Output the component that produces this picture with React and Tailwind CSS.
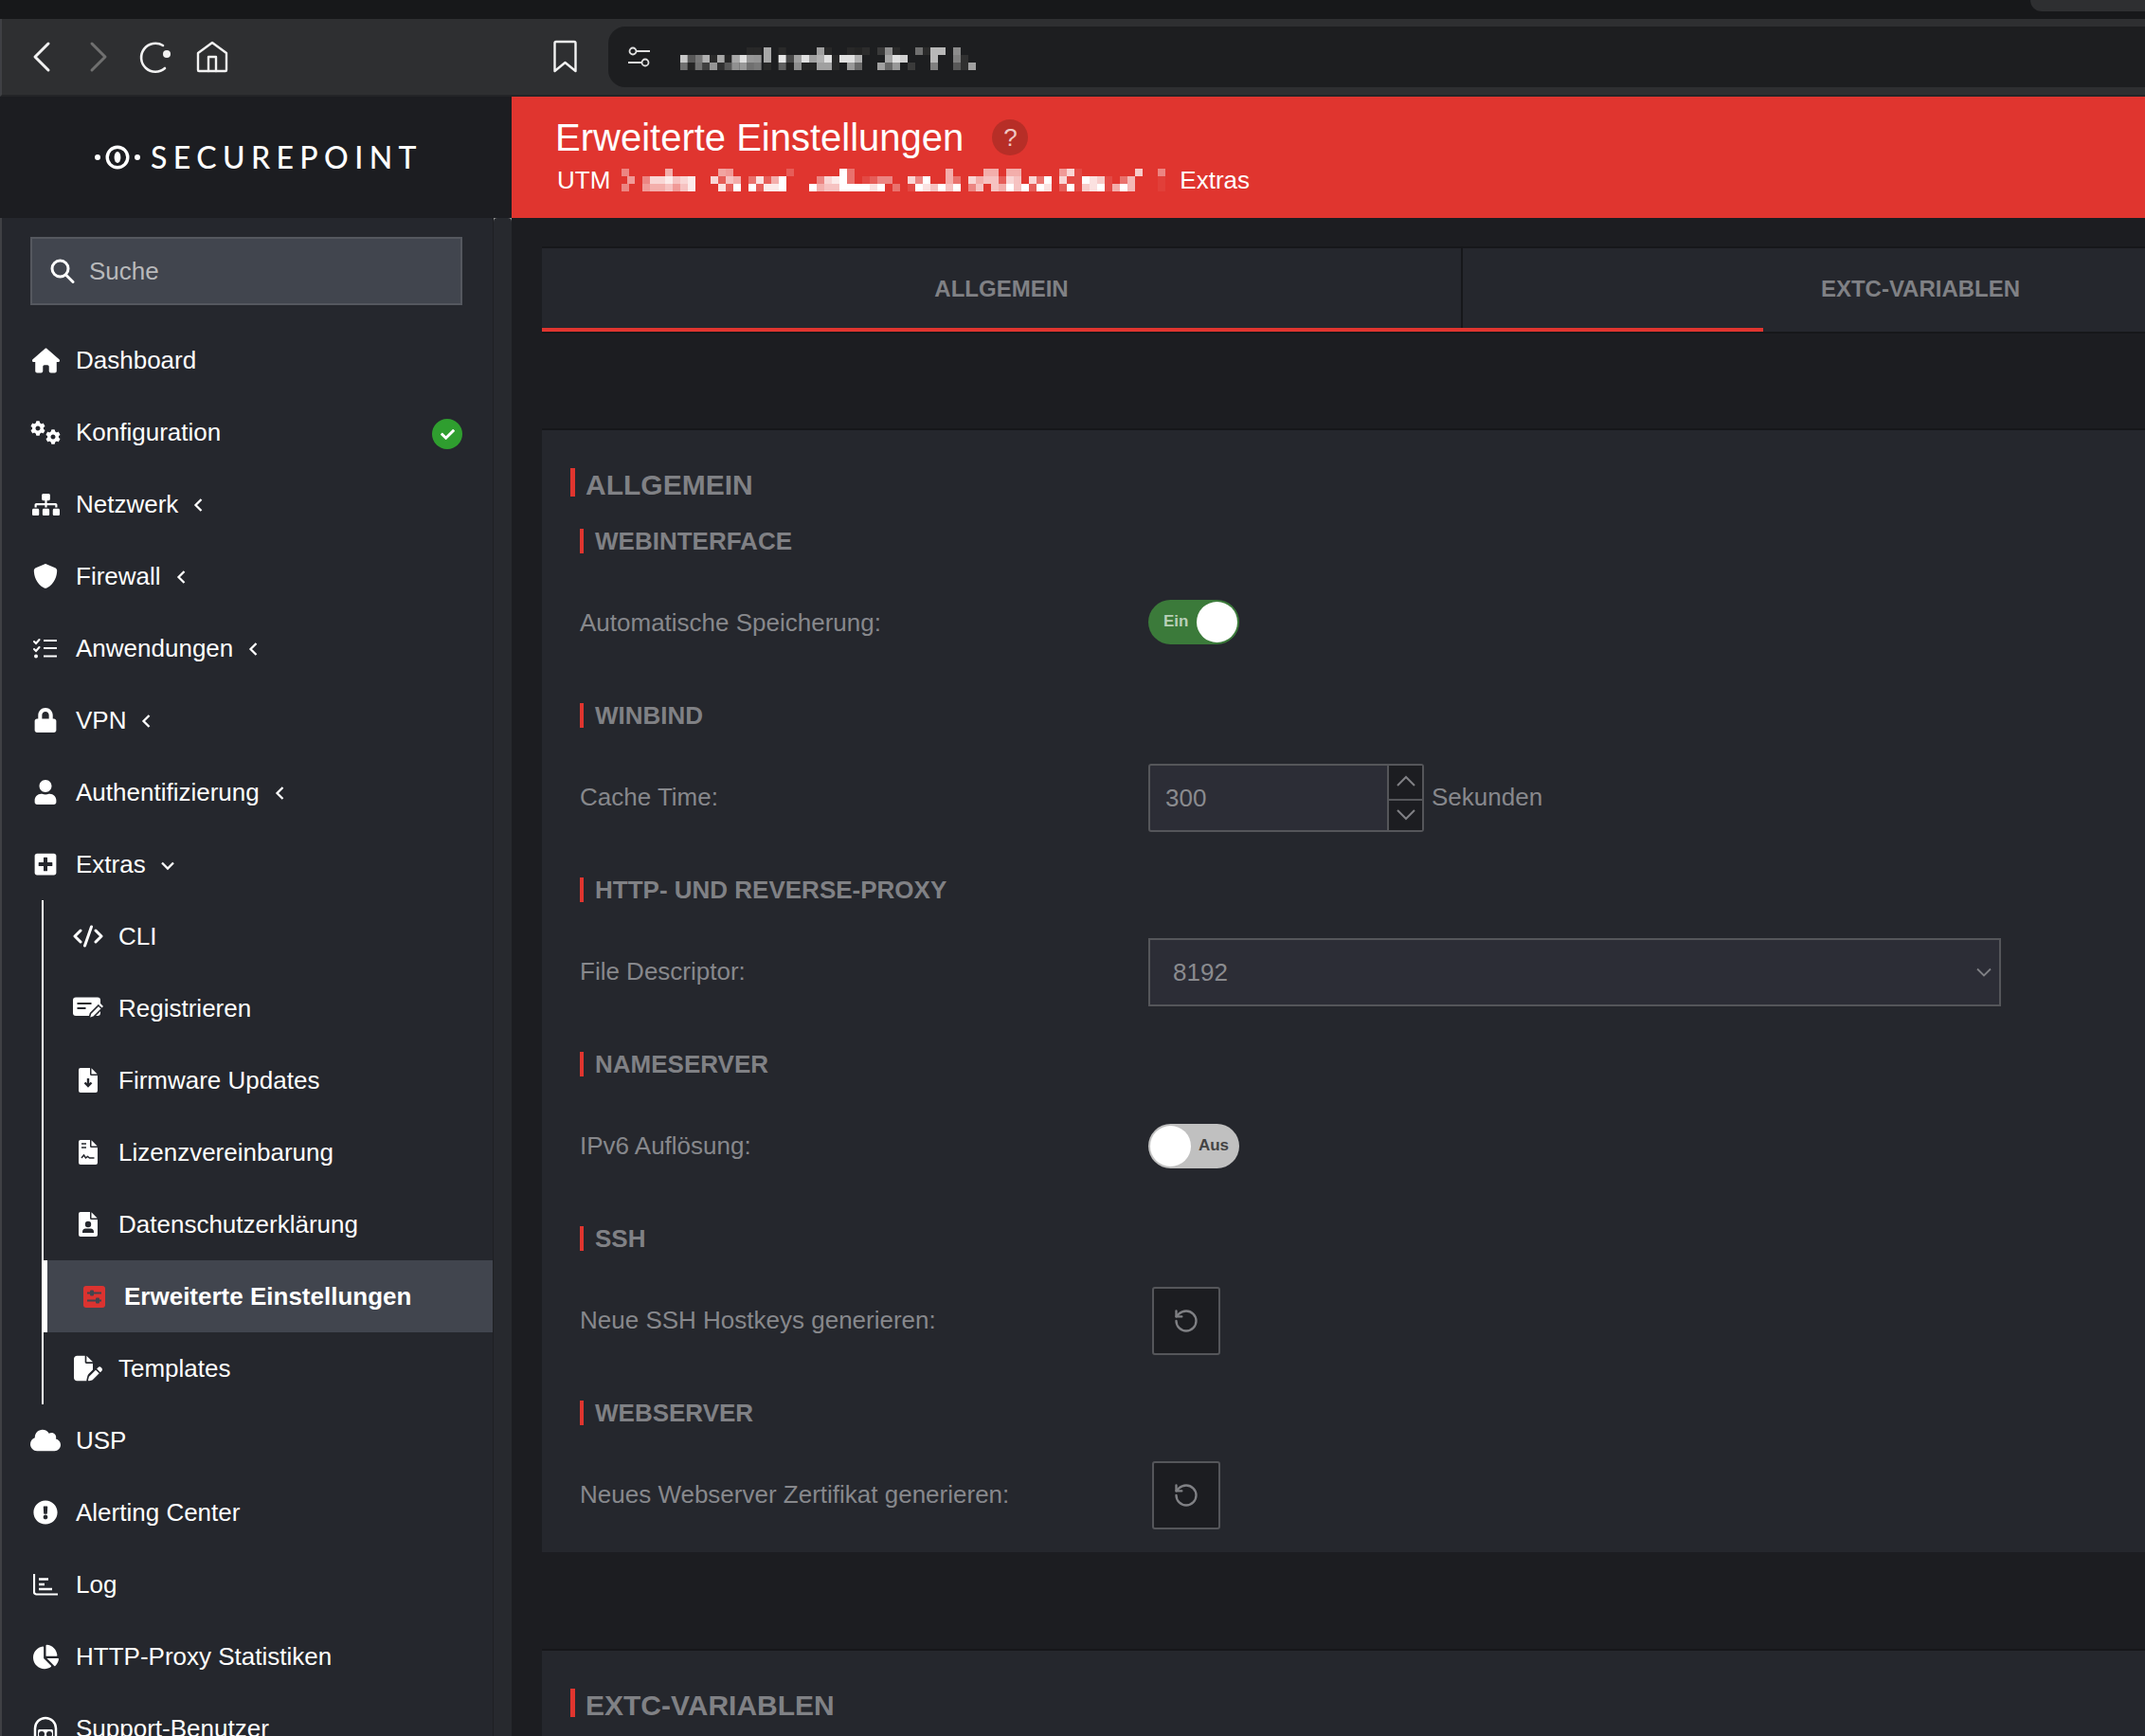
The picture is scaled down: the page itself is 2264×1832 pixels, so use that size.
import {
  FaCog, FaSitemap, FaLock, FaUser, FaPlusSquare, FaCloud,
  FaExclamationCircle, FaChartPie, FaCheck,
} from "react-icons/fa";
import { FaFilePen, FaHouse, FaShield } from "react-icons/fa6";
import { RotateCcw } from "lucide-react";

const BG = "#25272d";

// mosaic of the blurred address: [x, row 0, row 1, row 2] in 3x units
const urlCells = [
  [54, "", "c8", "70"], [77, "", "58", "25"], [101, "", "78", "72"], [124, "", "b0", "40"],
  [147, "", "2a", "95"], [171, "", "a8", "30"], [194, "", "24", "58"], [217, "", "a8", "90"],
  [241, "", "e0", "98"], [264, "28", "98", "70"], [287, "28", "95", "78"], [318, "a8", "a8", "28"],
  [365, "2a", "e8", "60"], [390, "", "48", "22"], [414, "", "a0", "8c"], [438, "", "e0", "25"],
  [462, "", "a0", "24"], [486, "a0", "b0", "a0"], [510, "28", "e0", "a0"], [534, "", "28", "28"],
  [558, "", "e0", ""], [582, "28", "e0", "98"], [606, "24", "b0", "68"], [630, "2c", "", ""],
  [678, "3a", "", "a0"], [702, "90", "a8", "68"], [726, "2a", "e0", "98"], [750, "", "d0", ""],
  [774, "", "", "3a"], [798, "70", "", ""], [822, "2a", "", ""], [846, "b8", "b8", "80"],
  [870, "b8", "", ""], [918, "8c", "80", "58"], [942, "", "30", "30"], [966, "", "", "a0"],
];

// mosaic of the blurred path in the header: [x, row 0, row 1, row 2], white opacity
const pathCells = [
  [48, 0.4, 0, 0.4], [66, 0, 0.5, 0], [114, 0, 0.4, 0.5], [138, 0, 0.8, 0.6], [162, 0, 0.8, 0.6],
  [186, 0.6, 0.9, 0.7], [210, 0, 0.7, 0.5], [234, 0, 0.8, 0.7], [258, 0, 0.9, 0.9], [330, 0, 0.8, 0],
  [354, 0.55, 0.2, 0.85], [378, 0.5, 0.7, 0.2], [402, 0, 0.6, 1], [450, 0, 0.3, 1], [474, 0, 0.85, 0.2],
  [498, 0, 0.2, 0.9], [522, 0, 0.6, 0.9], [546, 0, 1, 1], [570, 0.2, 0, 0], [642, 0, 0, 1],
  [666, 0, 0.4, 0.6], [690, 0, 0.8, 0.7], [714, 0, 0.9, 0.7], [738, 1, 1, 1], [762, 0.3, 0.3, 1],
  [786, 0, 0, 1], [810, 0, 0.1, 1], [834, 0, 0.2, 0.85], [858, 0, 0.4, 1], [882, 0, 0.4, 0],
  [906, 0, 0, 0.3], [954, 0, 0.8, 0.1], [978, 0, 0.4, 1], [1002, 0, 1, 0.85], [1026, 0, 0, 0.7],
  [1050, 0, 0, 1], [1074, 0.6, 0.6, 0.7], [1098, 0, 0.3, 1], [1146, 0, 0.8, 0.4], [1170, 0, 0.6, 0.7],
  [1194, 0.6, 0.7, 0], [1218, 0.6, 0.7, 0.7], [1242, 0, 0.2, 0.6], [1266, 0.6, 0.8, 1], [1290, 0.6, 0.7, 0.7],
  [1314, 0, 0, 1], [1338, 0, 0.8, 0.2], [1362, 0, 0.3, 1], [1386, 0, 1, 0.85], [1434, 0.5, 0.8, 0.2],
  [1458, 0.8, 0.1, 1], [1482, 0.1, 0.1, 0.1], [1506, 0, 1, 0.75], [1530, 0, 0.85, 0.85], [1554, 0, 0.75, 1],
  [1578, 0, 0.1, 0.1], [1602, 0, 0, 0.6], [1626, 0, 0.3, 1], [1650, 0, 0.65, 0.65], [1674, 0.75, 0, 0],
  [1746, 0.4, 0.05, 0.05],
];

function UrlMosaic() {
  return (
    <svg width="340" height="24" viewBox="0 0 1020 72" className="mt-[4px] ml-[14px] shrink-0">
      {urlCells.map(([x, ...rows]) =>
        rows.map((g, r) => g && <rect key={x + "-" + r} x={x} y={r * 24} width="24" height="24" fill={`#${g}${g}${g}`} />)
      )}
    </svg>
  );
}

function PathMosaic() {
  return (
    <svg width="600" height="24" viewBox="0 0 1800 72" className="-ml-[4px] shrink-0">
      {pathCells.map(([x, ...rows]) =>
        rows.map((o, r) => o > 0 && <rect key={x + "-" + r} x={x} y={r * 24} width="24" height="24" fill="#fff" fillOpacity={o} />)
      )}
    </svg>
  );
}

function Logo() {
  return (
    <div className="flex items-center h-[128px] bg-[#1c1d21] pl-[100px] text-white">
      <svg width="48" height="26" viewBox="0 0 48 26" className="shrink-0" fill="none" stroke="#fff">
        <circle cx="3" cy="13" r="3" fill="#fff" stroke="none" />
        <circle cx="45" cy="13" r="3" fill="#fff" stroke="none" />
        <circle cx="24" cy="13" r="10.800" strokeWidth="3.400" />
        <ellipse cx="24" cy="13" rx="3.400" ry="6" fill="#fff" stroke="none" />
      </svg>
      <span className="ml-[11px] text-[32px] leading-none tracking-[6.4px] font-medium font-['Lato',sans-serif]">SECUREPOINT</span>
    </div>
  );
}

function CogsIcon() {
  return (
    <span className="flex justify-between w-[32px] h-[25px]">
      <FaCog size={16} color="#fff" className="self-start" />
      <FaCog size={16} color="#fff" className="self-end" />
    </span>
  );
}

function SearchIcon() {
  return (
    <svg width="26" height="26" viewBox="0 0 26 26" fill="none" stroke="#fff" strokeWidth="3" strokeLinecap="round">
      <circle cx="10.500" cy="10.500" r="8.500" />
      <path d="M16.500 17l7.500 7.500" />
    </svg>
  );
}

function TasksIcon() {
  return (
    <svg width="26" height="22" viewBox="0 0 26 22" fill="none" stroke="#fff" strokeWidth="2" strokeLinecap="round">
      <path d="M1 4l2 2 3.500-4M1 12l2 2 3.500-4" />
      <circle cx="3" cy="19.500" r="2" fill="#fff" stroke="none" />
      <path d="M11 3h14M11 11h14M11 19.500h14" strokeLinecap="butt" />
    </svg>
  );
}

function CodeIcon() {
  return (
    <svg width="32" height="24" viewBox="0 0 32 24" fill="none" stroke="#fff" strokeWidth="3" strokeLinecap="round" strokeLinejoin="round">
      <path d="M8 6l-6 6 6 6M24 6l6 6-6 6M19.500 2l-7 20" />
    </svg>
  );
}

function CardPenIcon() {
  return (
    <svg width="32" height="24" viewBox="0 0 32 24" fill="none">
      <rect x="0" y="0.500" width="29" height="19.500" rx="3" fill="#fff" />
      <path d="M4.500 7h15M4.500 12h9" stroke={BG} strokeWidth="2.200" />
      <path d="M17 23l1.500-5.500L27 9l3.500 3.500-8.500 8.500z" fill="#fff" stroke={BG} strokeWidth="1.600" />
      <path d="M27.500 8.500l1.500-1.500 3 3-1.500 1.500z" fill="#fff" />
    </svg>
  );
}

function FileIcon({ children }) {
  return (
    <svg width="20" height="26" viewBox="0 0 20 26">
      <path d="M2 0h10v6.500a1.500 1.500 0 0 0 1.500 1.500H20v16a2 2 0 0 1-2 2H2a2 2 0 0 1-2-2V2a2 2 0 0 1 2-2z" fill="#fff" />
      <path d="M13.500 0.300L19.700 6.500H13.500z" fill="#fff" />
      {children}
    </svg>
  );
}

function SlidersIcon() {
  return (
    <svg width="23" height="23" viewBox="0 0 23 23">
      <rect width="23" height="23" rx="3" fill="#dc3330" />
      <path d="M4 7.500h15M4 15.500h15" stroke="#41454e" strokeWidth="2" />
      <rect x="7" y="4.500" width="4" height="6" rx="1" fill="#41454e" />
      <rect x="13" y="12.500" width="4" height="6" rx="1" fill="#41454e" />
    </svg>
  );
}

function LogIcon() {
  return (
    <svg width="26" height="23" viewBox="0 0 26 23" fill="none" stroke="#fff">
      <path d="M1 0v19a2.500 2.500 0 0 0 2.500 2.500H26" strokeWidth="2.200" />
      <path d="M6 5.500h10M6 11h6M6 16h14" strokeWidth="2.600" />
    </svg>
  );
}

function SupportIcon() {
  return (
    <svg width="26" height="26" viewBox="0 0 26 26">
      <path d="M2 22v-9a11 11 0 0 1 22 0v9" fill="none" stroke="#fff" strokeWidth="2.500" />
      <path d="M6 14h14a2 2 0 0 1 1 2v8H5v-8a2 2 0 0 1 1-2z" fill="#fff" />
      <circle cx="9" cy="19" r="3" fill={BG} />
      <circle cx="17" cy="19" r="3" fill={BG} />
    </svg>
  );
}

function Chevron({ down }) {
  return down ? (
    <svg width="14" height="10" viewBox="0 0 14 10" fill="none" stroke="#fff" strokeWidth="2.300" className="ml-[16px] mt-[4px]">
      <path d="M1 1.500l6 6 6-6" />
    </svg>
  ) : (
    <svg width="10" height="14" viewBox="0 0 10 14" fill="none" stroke="#fff" strokeWidth="2.300" className="ml-[16px] mt-[2px]">
      <path d="M8.500 1l-6 6 6 6" />
    </svg>
  );
}

function NavRow({ icon, label, chevron, badge }) {
  return (
    <div className="flex items-center h-[76px] pl-[30px] pr-[32px] text-white text-[26px]">
      <span className="flex justify-center items-center w-[32px] mr-[16px] shrink-0">{icon}</span>
      <span>{label}</span>
      {chevron && <Chevron down={chevron === "down"} />}
      {badge && (
        <span className="ml-auto mt-[4px] flex items-center justify-center w-[32px] h-[32px] rounded-full bg-[#2f9e2f]">
          <FaCheck size={15} color="#fff" />
        </span>
      )}
    </div>
  );
}

function SubRow({ icon, label, active }) {
  if (active) {
    return (
      <div className="flex items-center h-[76px] -ml-[2px] border-l-[6px] border-white bg-[#41454e] pl-[33px] text-white text-[26px] font-bold">
        <span className="flex justify-center items-center w-[32px] mr-[16px] shrink-0">{icon}</span>
        <span>{label}</span>
      </div>
    );
  }
  return (
    <div className="flex items-center h-[76px] pl-[31px] text-white text-[26px]">
      <span className="flex justify-center items-center w-[32px] mr-[16px] shrink-0">{icon}</span>
      <span>{label}</span>
    </div>
  );
}

function Sidebar() {
  return (
    <div className="w-[540px] shrink-0 flex flex-col">
      <Logo />
      <div className="flex flex-1 min-h-0">
        <div className="w-[2px] bg-[#3f4044] shrink-0" />
        <div className="flex-1 bg-[#25272d] overflow-hidden">
          <div className="pt-[20px] pl-[30px] pb-[20px]">
            <div className="flex items-center w-[456px] h-[72px] bg-[#41454e] border-2 border-[#55585f] pl-[19px] text-[26px] text-[#b8b9bb]">
              <SearchIcon />
              <span className="ml-[15px]">Suche</span>
            </div>
          </div>
          <NavRow icon={<FaHouse size={29} color="#fff" />} label="Dashboard" />
          <NavRow icon={<CogsIcon />} label="Konfiguration" badge />
          <NavRow icon={<FaSitemap size={29} color="#fff" />} label="Netzwerk" chevron="left" />
          <NavRow icon={<FaShield size={26} color="#fff" />} label="Firewall" chevron="left" />
          <NavRow icon={<TasksIcon />} label="Anwendungen" chevron="left" />
          <NavRow icon={<FaLock size={26} color="#fff" />} label="VPN" chevron="left" />
          <NavRow icon={<FaUser size={26} color="#fff" />} label="Authentifizierung" chevron="left" />
          <NavRow icon={<FaPlusSquare size={26} color="#fff" />} label="Extras" chevron="down" />
          <div className="ml-[42px] border-l-2 border-white">
            <SubRow icon={<CodeIcon />} label="CLI" />
            <SubRow icon={<CardPenIcon />} label="Registrieren" />
            <SubRow
              icon={
                <FileIcon>
                  <path d="M10 11v8M6.500 15.500l3.500 3.500 3.500-3.500" fill="none" stroke={BG} strokeWidth="2.400" />
                </FileIcon>
              }
              label="Firmware Updates"
            />
            <SubRow
              icon={
                <FileIcon>
                  <path d="M3 4h5M3 8h5" stroke={BG} strokeWidth="1.500" />
                  <path d="M3 19l2.500-3 2 3 2-1.500 2 1.500h5" fill="none" stroke={BG} strokeWidth="1.500" />
                </FileIcon>
              }
              label="Lizenzvereinbarung"
            />
            <SubRow
              icon={
                <FileIcon>
                  <circle cx="10" cy="13" r="3.200" fill={BG} />
                  <path d="M4 22v-1a3.500 3.500 0 0 1 3.500-3.500h5a3.500 3.500 0 0 1 3.500 3.500v1z" fill={BG} />
                </FileIcon>
              }
              label="Datenschutzerklärung"
            />
            <SubRow icon={<SlidersIcon />} label="Erweiterte Einstellungen" active />
            <SubRow icon={<FaFilePen size={30} color="#fff" />} label="Templates" />
          </div>
          <NavRow icon={<FaCloud size={32} color="#fff" />} label="USP" />
          <NavRow icon={<FaExclamationCircle size={26} color="#fff" />} label="Alerting Center" />
          <NavRow icon={<LogIcon />} label="Log" />
          <NavRow icon={<FaChartPie size={27} color="#fff" />} label="HTTP-Proxy Statistiken" />
          <NavRow icon={<SupportIcon />} label="Support-Benutzer" />
        </div>
        <div className="w-[20px] shrink-0 bg-[#27292e] border-l border-[#1e1f23]">
          <svg width="19" height="7" viewBox="0 0 19 7" fill="#9a9a9a" className="block">
            <path d="M0 0h4a4 4 0 0 0-4 4zM19 0h-4a4 4 0 0 1 4 4z" />
          </svg>
        </div>
      </div>
    </div>
  );
}

function SectionTitle({ children }) {
  return (
    <div className="flex items-center h-[30px] border-l-[5px] border-[#e0352f] pl-[11px] pt-[5px] text-[30px] font-bold text-[#808185]">
      {children}
    </div>
  );
}

function GroupTitle({ children }) {
  return (
    <div className="flex items-center h-[26px] border-l-4 border-[#e0352f] pl-[12px] text-[26px] font-bold text-[#808185]">
      {children}
    </div>
  );
}

function Row({ label, children }) {
  return (
    <div className="flex items-center h-[72px] mt-[38px] mb-[48px] last:mb-0 text-[26px] text-[#87888c]">
      <span className="w-[600px] shrink-0 pb-[2px]">{label}</span>
      {children}
    </div>
  );
}

function Toggle({ on }) {
  return on ? (
    <div className="flex items-center justify-between w-[96px] h-[47px] -mt-[4px] rounded-full bg-[#3b7a3a] pl-[16px] pr-[2px]">
      <span className="text-[17px] font-bold text-[#b9d0b8]">Ein</span>
      <span className="w-[43px] h-[43px] rounded-full bg-white" />
    </div>
  ) : (
    <div className="flex items-center justify-between w-[96px] h-[47px] -mt-[2px] rounded-full bg-[#c0c0c0] pl-[2px] pr-[11px]">
      <span className="w-[43px] h-[43px] rounded-full bg-white" />
      <span className="text-[17px] font-bold text-[#444]">Aus</span>
    </div>
  );
}

function ResetButton() {
  return (
    <div className="ml-[4px] flex items-center justify-center w-[72px] h-[72px] rounded-[3px] bg-[#1c1d21] border-2 border-[#55565a]">
      <RotateCcw size={28} color="#808185" strokeWidth={2} />
    </div>
  );
}

function Main() {
  return (
    <div className="flex-1 min-w-0 flex flex-col">
      <div className="h-[128px] bg-[#e0352f] pl-[46px] pt-[24px] text-white">
        <div className="flex items-center h-[38px]">
          <span className="text-[40px] leading-none">Erweiterte Einstellungen</span>
          <span className="ml-[30px] flex items-center justify-center w-[38px] h-[38px] rounded-full bg-[#b72e27] text-[26px] text-[#f0c8c4]">?</span>
        </div>
        <div className="flex items-center h-[24px] mt-[14px] pl-[2px] text-[26px]">
          <span>UTM</span>
          <PathMosaic />
          <span className="ml-[5px]">Extras</span>
        </div>
      </div>
      <div className="flex-1 min-h-0 bg-[#1c1d21] pl-[32px] pt-[30px] overflow-hidden">
        <div className="flex h-[92px] border-y-2 border-[#16171a] bg-[#25272d] relative text-[24px] font-bold text-[#808185]">
          <div className="flex items-center justify-center w-[972px] shrink-0 border-r-2 border-[#16171a] pb-[2px]">ALLGEMEIN</div>
          <div className="flex items-center justify-center w-[966px] shrink-0 pb-[2px]">EXTC-VARIABLEN</div>
          <div className="absolute left-0 bottom-0 w-[1289px] h-[4px] bg-[#e0352f]" />
        </div>
        <div className="mt-[100px] border-t-2 border-[#16171a] bg-[#25272d] pt-[40px] pl-[30px] pb-[24px]">
          <SectionTitle>ALLGEMEIN</SectionTitle>
          <div className="pl-[10px] pt-[34px]">
            <GroupTitle>WEBINTERFACE</GroupTitle>
            <Row label="Automatische Speicherung:"><Toggle on /></Row>
            <GroupTitle>WINBIND</GroupTitle>
            <Row label="Cache Time:">
              <div className="flex w-[291px] h-[72px] rounded-[3px] border-2 border-[#55565a] bg-[#2c2d36]">
                <span className="flex-1 flex items-center pl-[16px] text-[#8a8b8f]">300</span>
                <div className="flex flex-col w-[37px] border-l-2 border-[#55565a] bg-[#1c1d21] divide-y-2 divide-[#55565a]">
                  <div className="flex-1 flex items-center justify-center pb-[3px]">
                    <svg width="22" height="12" viewBox="0 0 22 12" fill="none" stroke="#808185" strokeWidth="2"><path d="M2 11l9-9 9 9" /></svg>
                  </div>
                  <div className="flex-1 flex items-center justify-center">
                    <svg width="22" height="12" viewBox="0 0 22 12" fill="none" stroke="#808185" strokeWidth="2"><path d="M2 1l9 9 9-9" /></svg>
                  </div>
                </div>
              </div>
              <span className="ml-[8px] pb-[2px]">Sekunden</span>
            </Row>
            <GroupTitle>HTTP- UND REVERSE-PROXY</GroupTitle>
            <Row label="File Descriptor:">
              <div className="flex items-center justify-between w-[900px] h-[72px] border-2 border-[#55565a] bg-[#2c2d36] pl-[24px] pr-[8px] text-[#8a8b8f]">
                <span>8192</span>
                <svg width="16" height="10" viewBox="0 0 16 10" fill="none" stroke="#808185" strokeWidth="1.800"><path d="M1 1.500l7 7 7-7" /></svg>
              </div>
            </Row>
            <GroupTitle>NAMESERVER</GroupTitle>
            <Row label="IPv6 Auflösung:"><Toggle /></Row>
            <GroupTitle>SSH</GroupTitle>
            <Row label="Neue SSH Hostkeys generieren:"><ResetButton /></Row>
            <GroupTitle>WEBSERVER</GroupTitle>
            <Row label="Neues Webserver Zertifikat generieren:"><ResetButton /></Row>
          </div>
        </div>
        <div className="mt-[102px] border-t-2 border-[#16171a] bg-[#25272d] pt-[40px] pl-[30px] h-[200px]">
          <SectionTitle>EXTC-VARIABLEN</SectionTitle>
        </div>
      </div>
    </div>
  );
}

function BrowserBar() {
  return (
    <>
      <div className="flex justify-end h-[20px] bg-[#17181a]">
        <div className="w-[121px] h-[12px] bg-[#2e2f31] rounded-bl-[12px]" />
      </div>
      <div className="flex h-[82px] bg-[#2e2f31] border-b-2 border-[#232427] pt-[8px] pb-[8px] border-l-2 border-l-[#3f4044]">
        <svg width="640" height="64" viewBox="2 28 640 64" fill="none" className="shrink-0" strokeLinecap="round" strokeLinejoin="round">
          <path d="M51 46L37 60l14 14" stroke="#f2f2f2" strokeWidth="3" />
          <path d="M97 46l14 14-14 14" stroke="#707070" strokeWidth="3" />
          <path d="M174 72A15 15 0 1 1 172 48" stroke="#f2f2f2" strokeWidth="2.600" />
          <circle cx="176" cy="57" r="4" fill="#f2f2f2" />
          <path d="M209 56l15-11 15 11v18a1 1 0 0 1-1 1h-28a1 1 0 0 1-1-1z" stroke="#f2f2f2" strokeWidth="2.400" />
          <path d="M220 75V60h8v15" stroke="#f2f2f2" strokeWidth="2.400" />
          <path d="M587 44h19a1.500 1.500 0 0 1 1.500 1.500V75l-11-9-11 9V45.500A1.500 1.500 0 0 1 587 44z" stroke="#f2f2f2" strokeWidth="2.400" />
        </svg>
        <div className="flex items-center flex-1 bg-[#1d1e20] rounded-l-[18px] pl-[21px]">
          <svg width="23" height="23" viewBox="0 0 23 23" fill="none" stroke="#e0e0e0" strokeWidth="1.800" className="shrink-0">
            <circle cx="5" cy="5" r="3.500" />
            <path d="M9 5h14M0 17h14" />
            <circle cx="18" cy="17" r="3.500" />
          </svg>
          <UrlMosaic />
        </div>
      </div>
    </>
  );
}

export default function App() {
  return (
    <div className="w-[2264px] h-[1832px] overflow-hidden flex flex-col bg-[#1c1d21] font-['Liberation_Sans',Arial,sans-serif]">
      <BrowserBar />
      <div className="flex flex-1 min-h-0">
        <Sidebar />
        <Main />
      </div>
    </div>
  );
}
